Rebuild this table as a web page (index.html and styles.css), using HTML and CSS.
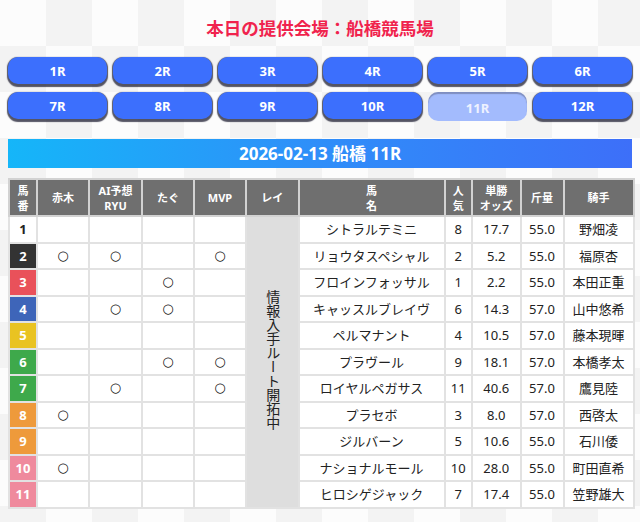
FILE: index.html
```html
<!DOCTYPE html>
<html lang="ja">
<head>
<meta charset="utf-8">
<link rel="stylesheet" href="styles.css">
</head>
<body>
<div class="page">
  <h1 class="title">本日の提供会場：船橋競馬場</h1>
  <div class="races">
    <a class="race">1R</a><a class="race">2R</a><a class="race">3R</a><a class="race">4R</a><a class="race">5R</a><a class="race">6R</a>
    <a class="race">7R</a><a class="race">8R</a><a class="race">9R</a><a class="race">10R</a><a class="race active">11R</a><a class="race">12R</a>
  </div>
  <div class="bar">2026-02-13 船橋 11R</div>
  <table class="tbl">
    <colgroup>
      <col class="c-no"><col class="c-p"><col class="c-p2"><col class="c-p"><col class="c-p"><col class="c-rei"><col class="c-name"><col class="c-pop"><col class="c-odds"><col class="c-wt"><col class="c-jk">
    </colgroup>
    <thead>
      <tr><th>馬<br>番</th><th>赤木</th><th>AI予想<br>RYU</th><th>たぐ</th><th>MVP</th><th>レイ</th><th>馬<br>名</th><th>人<br>気</th><th>単勝<br>オッズ</th><th>斤量</th><th>騎手</th></tr>
    </thead>
    <tbody>
      <tr><td class="no w1">1</td><td></td><td></td><td></td><td></td><td class="rei" rowspan="11"><span class="vt">情報入手ルート開拓中</span></td><td>シトラルテミニ</td><td>8</td><td>17.7</td><td>55.0</td><td>野畑凌</td></tr>
      <tr><td class="no w2">2</td><td class="mk">○</td><td class="mk">○</td><td></td><td class="mk">○</td><td>リョウタスペシャル</td><td>2</td><td>5.2</td><td>55.0</td><td>福原杏</td></tr>
      <tr><td class="no w3">3</td><td></td><td></td><td class="mk">○</td><td></td><td>フロインフォッサル</td><td>1</td><td>2.2</td><td>55.0</td><td>本田正重</td></tr>
      <tr><td class="no w4">4</td><td></td><td class="mk">○</td><td class="mk">○</td><td></td><td>キャッスルブレイヴ</td><td>6</td><td>14.3</td><td>57.0</td><td>山中悠希</td></tr>
      <tr><td class="no w5">5</td><td></td><td></td><td></td><td></td><td>ペルマナント</td><td>4</td><td>10.5</td><td>57.0</td><td>藤本現暉</td></tr>
      <tr><td class="no w6">6</td><td></td><td></td><td class="mk">○</td><td class="mk">○</td><td>プラヴール</td><td>9</td><td>18.1</td><td>57.0</td><td>本橋孝太</td></tr>
      <tr><td class="no w6">7</td><td></td><td class="mk">○</td><td></td><td class="mk">○</td><td>ロイヤルペガサス</td><td>11</td><td>40.6</td><td>57.0</td><td>鷹見陸</td></tr>
      <tr><td class="no w8">8</td><td class="mk">○</td><td></td><td></td><td></td><td>プラセボ</td><td>3</td><td>8.0</td><td>57.0</td><td>西啓太</td></tr>
      <tr><td class="no w8">9</td><td></td><td></td><td></td><td></td><td>ジルバーン</td><td>5</td><td>10.6</td><td>55.0</td><td>石川倭</td></tr>
      <tr><td class="no w10">10</td><td class="mk">○</td><td></td><td></td><td></td><td>ナショナルモール</td><td>10</td><td>28.0</td><td>55.0</td><td>町田直希</td></tr>
      <tr><td class="no w10">11</td><td></td><td></td><td></td><td></td><td>ヒロシゲジャック</td><td>7</td><td>17.4</td><td>55.0</td><td>笠野雄大</td></tr>
    </tbody>
  </table>
</div>
</body>
</html>
```

FILE: styles.css
```css
* { box-sizing: border-box; }
html, body { margin: 0; padding: 0; }
body {
  font-family: "Noto Sans", "Noto Sans CJK JP", sans-serif;
  color: #222;
  background-color: #f9f9f9;
  background-image:
    repeating-conic-gradient(#f3f3f3 0 25%, #fcfcfc 0 50%);
  background-size: 92px 92px;
  width: 640px;
  height: 522px;
  overflow: hidden;
}
.page {
  padding: 16px 8px 0;
}
.title {
  margin: 0;
  text-align: center;
  font-size: 17.5px;
  line-height: 24px;
  font-weight: 700;
  color: #f0234d;
}
.races {
  margin-top: 17px;
  display: grid;
  grid-template-columns: repeat(6, 1fr);
  column-gap: 6px;
  row-gap: 6px;
}
.race {
  display: flex;
  align-items: center;
  justify-content: center;
  height: 27px;
  margin-bottom: 2px;
  border-radius: 10px;
  background: #3c6ffd;
  color: #fff;
  font-weight: 700;
  font-size: 13px;
  box-shadow: 0 1.5px 1px 1px rgba(30, 30, 50, 0.75);
}
.race.active {
  background: #a3bbfd;
  color: #eef2ff;
  box-shadow: inset 0 2px 1px rgba(60, 60, 80, 0.35);
  padding-top: 3px;
  height: 29px;
  margin-bottom: 0;
}
.bar {
  margin-top: 18px;
  height: 29px;
  line-height: 29px;
  text-align: center;
  color: #fff;
  font-weight: 700;
  font-size: 17px;
  background: linear-gradient(90deg, #15b6f9 0%, #2f8ef9 50%, #3d6ff9 100%);
}
.tbl {
  margin-top: 10px;
  width: 624px;
  border-collapse: collapse;
  table-layout: fixed;
  background: #fff;
}
.c-no { width: 28px; }
.c-p { width: 52px; }
.c-p2 { width: 53px; }
.c-rei { width: 52.5px; }
.c-name { width: 146px; }
.c-pop { width: 27.5px; }
.c-odds { width: 48.5px; }
.c-wt { width: 43px; }
.c-jk { width: 70px; }
.tbl th {
  background: #6f6f6f;
  color: #fff;
  font-size: 11px;
  font-weight: 700;
  line-height: 15px;
  height: 37px;
  padding: 0;
  border: 2px solid #d2d2d2;
  text-align: center;
}
.tbl td {
  height: 26.5px;
  padding: 0;
  border: 2px solid #e2e2e2;
  text-align: center;
  font-size: 13px;
  line-height: 16px;
  color: #222;
}
.tbl td.mk {
  font-family: "DejaVu Sans", sans-serif;
  font-size: 13px;
  font-weight: 700;
  color: #111;
}
.tbl td.no {
  font-weight: 700;
  color: #fff;
}
.w1 { background: #fff; color: #222 !important; }
.w2 { background: #333; }
.w3 { background: #e9515a; }
.w4 { background: #3e65b9; }
.w5 { background: #e9c322; }
.w6 { background: #3ea94b; }
.w8 { background: #ee9a3b; }
.w10 { background: #ef8a9d; }
.tbl td.rei {
  background: #dedede;
  vertical-align: middle;
}
.vt {
  writing-mode: vertical-rl;
  font-size: 14px;
  line-height: 16px;
  color: #222;
  display: inline-block;
}
```
